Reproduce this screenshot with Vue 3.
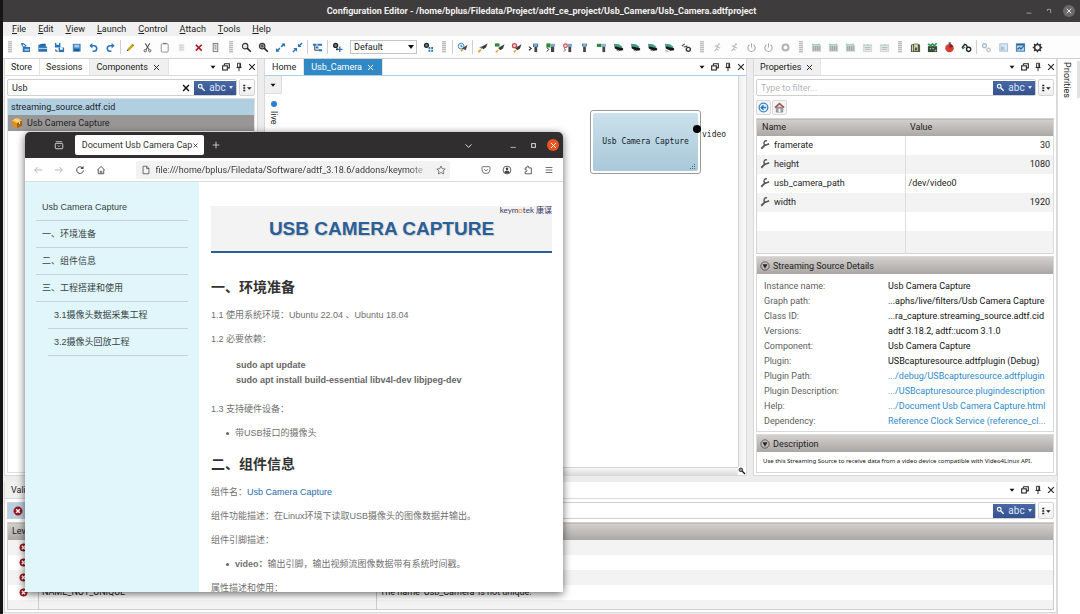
<script setup>
import { ref } from 'vue'

const icons = {
  // dock controls
  down: '<path d="M3 4.500h6L6 8z" fill="#111"/>',
  float: '<path d="M4 2h6v5H8M4 2v2" fill="none" stroke="#222" stroke-width="1.300"/><rect x="2" y="4.600" width="5.600" height="5" fill="#fff" stroke="#222" stroke-width="1.300"/>',
  pin: '<path d="M4.300 1.500h3.600v5H4.300zM3 6.700h6M6 7v4" fill="none" stroke="#222" stroke-width="1.100"/><path d="M6.500 2h1.400v4.500H6.500z" fill="#222"/>',
  close: '<path d="M2.600 2.600l6.800 6.800M9.400 2.600L2.600 9.400" stroke="#222" stroke-width="1.300"/>',
  closeW: '<path d="M2.600 2.600l6.800 6.800M9.400 2.600L2.600 9.400" stroke="#fff" stroke-width="1.300"/>',
  clear: '<path d="M2.500 2.500l7 7M9.500 2.500l-7 7" stroke="#111" stroke-width="1.800"/>',
  lens: '<circle cx="4.300" cy="4.300" r="2.500" fill="none" stroke="#fff" stroke-width="1.500"/><path d="M6.200 6.200l4 4" stroke="#fff" stroke-width="1.800"/>',
  opts: '<path d="M1.500 2h2.400v2H1.500zM1.500 5h2.400v2H1.500zM1.500 8h2.400v2H1.500zM6 5h5.600L8.800 8z" fill="#222"/>',
  // toolbar: file
  new: '<path d="M3 4.500h3l1 1h4V11H3z" fill="#2c74b8"/><path d="M5 7.500h5v2H5z" fill="#a9c9e4"/><path d="M1 2h3.500M2.500 1v4M4.500 2.500l2.500 2" stroke="#2c74b8" stroke-width="1.200"/>',
  open: '<path d="M1.500 10.500V3h3l1-1h4v3h1.500v5.500z" fill="#2c74b8"/><path d="M2 7h9" stroke="#cfe0ee"/><path d="M3 3h6" stroke="#154b7c"/>',
  saveas: '<path d="M1 1h6v5H1z" fill="#2c74b8"/><path d="M2.500 1h3v2h-3z" fill="#fff"/><path d="M5 6h6v5H5z" fill="#2c74b8"/><path d="M6.500 6h3v2.400h-3z" fill="#fff"/><path d="M2 8v2h2" stroke="#333" fill="none"/>',
  save: '<path d="M2 2h8.500v8.500H2z" fill="#3a82c2"/><path d="M3.500 3h5.500v3H3.500z" fill="#a9cbe6"/><path d="M3.500 8H9v2H3.500z" fill="#185488"/>',
  undo: '<path d="M3 4h3.500a3 3 0 010 6H5" fill="none" stroke="#2c74b8" stroke-width="1.700"/><path d="M4.800 1v6L1.500 4z" fill="#2c74b8"/>',
  redo: '<path d="M9 4H5.500a3 3 0 000 6H7" fill="none" stroke="#2c74b8" stroke-width="1.700"/><path d="M7.200 1v6l3.300-3z" fill="#2c74b8"/>',
  pencil: '<path d="M3.500 8.500l5-5" stroke="#c9a80c" stroke-width="2.600"/><path d="M8 2.800l1.500 1.400" stroke="#8a7420" stroke-width="1.500"/><path d="M2 10l.6-2 1.500 1.300z" fill="#333"/>',
  cut: '<path d="M3.500 1.500l4.300 7M8.500 1.500l-4.300 7" stroke="#555" stroke-width="1.100"/><circle cx="3.500" cy="9.500" r="1.300" fill="none" stroke="#555"/><circle cx="8.500" cy="9.500" r="1.300" fill="none" stroke="#555"/>',
  copy: '<rect x="2.500" y="2" width="7.500" height="9" rx="1" fill="#fff" stroke="#888"/><path d="M4.500 1.500h3.500" stroke="#666"/>',
  paste: '<rect x="3" y="2" width="6" height="8" fill="#e6e6e6"/><path d="M4 4h4M4 6h4M4 8h4" stroke="#d2d2d2"/>',
  del: '<path d="M3 3l6.500 6.500M9.500 3L3 9.500" stroke="#b51a1a" stroke-width="1.800"/>',
  panel: '<rect x="3.500" y="1.500" width="5" height="9" fill="#eee" stroke="#777"/><path d="M5 3.500h2M5 5.500h2M5 7.500h2" stroke="#777"/>',
  zoomout: '<circle cx="4.500" cy="4.500" r="3" fill="#e4e4e4" stroke="#333" stroke-width="1.200"/><path d="M6.700 6.700l4 4" stroke="#222" stroke-width="1.700"/>',
  zoomin: '<circle cx="4.500" cy="4.500" r="3" fill="#aaa" stroke="#333" stroke-width="1.200"/><path d="M6.700 6.700l4 4" stroke="#222" stroke-width="1.700"/><path d="M3 4.500h3M4.500 3v3" stroke="#333"/>',
  expand: '<path d="M7 1.500h4v4zM5 10.500H1v-4z" fill="#2c74b8"/><path d="M6.700 5.300l3-3M2.300 9.700l3-3" stroke="#2c74b8" stroke-width="1.600"/>',
  shrink: '<path d="M6.500 1.500v4h4zM5.500 10.500v-4h-4z" fill="#2c74b8"/><path d="M8 4l3-3M1 11l3-3" stroke="#2c74b8" stroke-width="1.600"/>',
  tree: '<path d="M1 2h4v2H1zM6 2h5v2H6zM4 5h3v2H4zM7 8h4v2H7z" fill="#2c74b8"/><path d="M3 4v5h4" fill="none" stroke="#333"/>',
  gearplus: '<circle cx="4" cy="3.800" r="2.200" fill="#777" stroke="#222" stroke-width="1.300"/><path d="M8.500 5v6M5.500 8h6" stroke="#2c74b8" stroke-width="1.500"/><circle cx="5.500" cy="8" r="1.200" fill="#333"/>',
  geargrid: '<circle cx="3.800" cy="3.600" r="2.200" fill="#777" stroke="#222" stroke-width="1.300"/><path d="M6 5.500h2v2H6zM9 5.500h2v2H9zM6 8.500h2v2H6zM9 8.500h2v2H9z" fill="#2c74b8"/>',
  clockrocket: '<circle cx="4.500" cy="4.500" r="3.200" fill="#e1edf7" stroke="#4a86bd"/><path d="M4.500 3v2h1.500" stroke="#2c74b8" fill="none"/><path d="M11.500 3L9.500 9 5.500 7z" fill="#4a4a4a"/><path d="M4.500 10l2-2" stroke="#e0861b" stroke-width="1.500"/>',
  rocket: '<path d="M11.500 1.500L9.800 6 7 8 4.200 5.500z" fill="#3d3d3d"/><path d="M5 5L2.500 5.700l2.800 2.300z" fill="#777"/><path d="M1.500 11l2.700-2.500" stroke="#e7a11b" stroke-width="2"/>',
  rocketg: '<path d="M11.500 2.500L9.800 7 7 9 4.500 6.500z" fill="#3d3d3d"/><path d="M2 11l2.500-2" stroke="#e7a11b" stroke-width="1.700"/><path d="M1 1.500h5V5H1z" fill="#2e8b3d"/>',
  rocketr: '<path d="M11.500 2.500L9.800 7 7 9 4.500 6.500z" fill="#3d3d3d"/><path d="M3 11l2.500-2" stroke="#e7a11b" stroke-width="1.700"/><circle cx="3.800" cy="4" r="2.200" fill="#f3d3d6" stroke="#c34a55" stroke-width="1.400"/>',
  term: '<path d="M1 5l2.500 2L1 9" fill="none" stroke="#222" stroke-width="1.100"/><path d="M5.500 1.500H11V5H5.500z" fill="#7aa9cf"/><path d="M7 5h3v6H7z" fill="#444"/><path d="M6 2.500v3M10.500 2.500v3" stroke="#33678f"/>',
  termg: '<path d="M1.500 1.500H6V6H1.500z" fill="#2e8b3d"/><path d="M2 6l2 2-2 2.500" fill="none" stroke="#222"/><path d="M6 2h5v3H6z" fill="#7aa9cf"/><path d="M6.500 5h3.500v6H6.500z" fill="#444"/>',
  termr: '<circle cx="3.800" cy="4" r="2" fill="#f7dddd" stroke="#c34a55" stroke-width="1.300"/><path d="M2 7l2 1.500-2 2" fill="none" stroke="#a33"/><path d="M6 2h5v3H6z" fill="#7aa9cf"/><path d="M7 5h3v6H7z" fill="#444"/>',
  torch: '<path d="M3.500 1.500h5V5h-5z" fill="#8db7d9"/><path d="M4.500 5h3v6h-3z" fill="#444"/><path d="M4 2v2.500M8 2v2.500" stroke="#33678f"/>',
  torchg: '<path d="M1 2h5v3.500H1z" fill="#2e8b3d"/><path d="M6 2h5v3H6z" fill="#8db7d9"/><path d="M7 5h3v6H7z" fill="#444"/>',
  car: '<path d="M1 2l5.500.5 4 3L9 7 1.500 4.500z" fill="#3f9c86"/><path d="M1.500 4.500l2.500.7 7 1.500V9L7 9.500 2 7z" fill="#161616"/><path d="M3.500 8.500l2.500 1.500" stroke="#777"/>',
  carlight: '<path d="M1 2l5.500.5 4 3L9 7 1.500 4.500z" fill="#3f9c86"/><path d="M1.500 4.500l2.500.7 7 1.500V9L7 9.500 2 7z" fill="#161616"/><path d="M1 9h3M2 10.500h3" stroke="#aaa"/>',
  wrenchcog: '<path d="M1 4.500l3-2.500M3 5.500l4-1" fill="none" stroke="#444" stroke-width="1.300"/><circle cx="8" cy="8" r="2.200" fill="#fff" stroke="#333" stroke-width="1.500"/>',
  run: '<circle cx="7.500" cy="2.500" r="1.100" fill="#bbb"/><path d="M3 4.500l3-.5 1 2 2 .5M6 5L5 7.500 7 9M5 7.500L2.500 10" fill="none" stroke="#bbb" stroke-width="1.200"/>',
  power: '<path d="M3.800 3a4 4 0 104.400 0M6 1.300V6" fill="none" stroke="#aaa" stroke-width="1.100"/>',
  stop: '<circle cx="6" cy="6" r="3.300" fill="none" stroke="#b4b4b4" stroke-width="2.200"/>',
  film: '<path d="M1 3.500h10v7H1z" fill="#c6ccc9"/><path d="M1 3.500V1.500l4 1 5-1v2z" fill="#9fd2b9"/><path d="M3 4.500v5M5 4.500v5M7 4.500v5M9 4.500v5" stroke="#98a39e"/>',
  filmlt: '<path d="M1.500 4h9v6.500h-9z" fill="#e4e8e6" stroke="#c3cbc7" stroke-width=".7"/><path d="M1.500 4V2l3 1 2-1 2 1 2-1v2z" fill="#aadcc4"/><path d="M3 6h6M3 8h6" stroke="#b3bbb7"/>',
  book: '<path d="M1 3v8h10V3L8 1.500 4 2z" fill="#5a5a48"/><path d="M4.500 2.500h4v7h-4z" fill="#d8d9a4"/><path d="M2.800 3.500v6.500" stroke="#e8e8e0"/><path d="M5.500 6h2v3h-2z" fill="#49493e"/>',
  clap: '<path d="M1 4.500h10V11H1z" fill="#394a3d"/><path d="M1 2l3 2 2-2 2 2 2.500-2.500" fill="none" stroke="#2b9b50" stroke-width="1.800"/><path d="M3 6.500h1.500v1.500H3zM6 6.500h1.500v1.500H6zM8.500 8.500H10V10H8.500z" fill="#a9c8ad"/>',
  record: '<circle cx="6" cy="6.700" r="4.600" fill="#d83b32"/><path d="M6 6.700V2.100a4.600 4.600 0 014 2.400z" fill="#7a2420"/><path d="M5 1.200h2.500" stroke="#333" stroke-width="1.500"/>',
  tools: '<path d="M1 6.500l3-4 2 1 1 2.500" fill="none" stroke="#222" stroke-width="1.500"/><circle cx="8.300" cy="8" r="2.300" fill="#fff" stroke="#222" stroke-width="1.500"/><path d="M1.500 7.500L4.500 5.500" stroke="#2c74b8" stroke-width="1.500"/>',
  link: '<circle cx="3.800" cy="4" r="2.100" fill="none" stroke="#a9b9c8" stroke-width="1.400"/><circle cx="8.300" cy="8.500" r="1.900" fill="none" stroke="#b7c5d2" stroke-width="1.400"/>',
  box: '<rect x="2" y="2" width="8.500" height="8" fill="#dbe7f1" stroke="#9dbdd8"/><path d="M3 5h4v4H3z" fill="#a9c5dc"/>',
  boxes: '<rect x="1.500" y="2" width="9" height="8" fill="#b4d1e9" stroke="#3077b3"/><path d="M2 3h8" stroke="#245f93" stroke-width="1.500"/><path d="M2.500 8l2.500-2 1.500 1.500L10 4" fill="none" stroke="#245f93" stroke-width="1.200"/>',
  gear: '<circle cx="6" cy="6" r="3.200" fill="none" stroke="#333" stroke-width="1.700"/><path d="M6 .8v2M6 9.200v2M.8 6h2M9.200 6h2M2.300 2.300l1.300 1.300M8.400 8.400l1.300 1.300M9.700 2.300L8.400 3.600M3.600 8.400L2.300 9.700" stroke="#333" stroke-width="1.500"/>',
  // panels
  cube: '<path d="M6 .8l5 2.700v5L6 11.300 1 8.500v-5z" fill="#d9901a"/><path d="M6 .8l5 2.700L6 6.200 1 3.500z" fill="#f6c75a"/><path d="M6 6.200l5-2.700v5L6 11.300z" fill="#a8630f"/><path d="M3.500 2.200l5 2.700v2" fill="none" stroke="#fbe5ae"/>',
  wrench: '<path d="M1.500 10.500L6.500 5.500" stroke="#555" stroke-width="2.200"/><path d="M8.300 1.200A2.600 2.600 0 106.600 6.200L11 4.500" fill="none" stroke="#555" stroke-width="1.700"/>',
  back: '<circle cx="6" cy="6" r="4.700" fill="#eaf3fb" stroke="#3f87c4" stroke-width="1.400"/><path d="M9 6H4M6 3.600L3.500 6 6 8.400" fill="none" stroke="#2c74b8" stroke-width="1.500"/>',
  house: '<path d="M2.500 5.500h7V11h-7z" fill="#a2a2a2" stroke="#777" stroke-width=".7"/><path d="M5 7.500h2V11H5z" fill="#fff"/><path d="M1 6.200l5-4.500 5 4.500" fill="none" stroke="#a4575a" stroke-width="1.800"/>',
  fold: '<circle cx="6" cy="6" r="5" fill="none" stroke="#444" stroke-width=".9"/><path d="M3 3.800h6L6 9z" fill="#222"/>',
  error: '<circle cx="6" cy="6" r="5" fill="#a4151b" stroke="#7b0c10" stroke-width=".6"/><path d="M3.800 3.800l4.400 4.400M8.200 3.800L3.800 8.200" stroke="#fff" stroke-width="1.800"/>',
  magnify: '<circle cx="4.300" cy="4.300" r="2.700" fill="#999" stroke="#222" stroke-width="1.300"/><path d="M6.500 6.500l4 4" stroke="#111" stroke-width="2"/>',
  // window buttons
  min: '<path d="M3 8.500h6" stroke="#aaa"/>',
  restore: '<path d="M4 4h4v4.500M4 4v2" fill="none" stroke="#aaa"/>',
  minW: '<path d="M2 8.500h7" stroke="#ddd"/>',
  max: '<rect x="3.500" y="3.500" width="5" height="5" fill="none" stroke="#ddd" stroke-width="1.300"/>',
  // browser
  archive: '<path d="M2 2h8" stroke="#ccc"/><rect x="1.500" y="4" width="9" height="6.500" rx="1" fill="none" stroke="#ccc" stroke-width="1.200"/><path d="M4.500 6.500L6 8l1.500-1.500" fill="none" stroke="#ccc"/>',
  plus: '<path d="M6 2v8M2 6h8" stroke="#ddd"/>',
  chev: '<path d="M2 4.500L6 8.500l4-4" fill="none" stroke="#ddd" stroke-width="1.300"/>',
  left: '<path d="M11 6H2M5.500 2.500L2 6l3.500 3.500" fill="none" stroke="#aaa"/>',
  right: '<path d="M1 6h9M6.500 2.500L10 6 6.500 9.500" fill="none" stroke="#aaa"/>',
  reload: '<path d="M10 6.500A4 4 0 118.700 3.200" fill="none" stroke="#444" stroke-width="1.200"/><path d="M10.200 1v3.800H6.500z" fill="#444"/>',
  home: '<path d="M1.500 6L6 1.800 10.500 6M2.700 5.200v5.300h6.600V5.200M5 10.300V7.500h2v2.800" fill="none" stroke="#444"/>',
  page: '<path d="M2.500 1.500h4.500l2.500 2.500v6.500h-7zM6.800 1.500v2.700h2.700" fill="none" stroke="#555"/>',
  star: '<path d="M6 1.200l1.500 3.200 3.500.4-2.600 2.400.7 3.500L6 9l-3.100 1.700.7-3.500L1 4.800l3.500-.4z" fill="none" stroke="#555" stroke-width=".9"/>',
  pocket: '<path d="M2 2h8a.8.8 0 01.8.8V5.500a4.800 4.800 0 01-9.600 0V2.800A.8.8 0 012 2zM3.800 5L6 7.200 8.200 5" fill="none" stroke="#444" stroke-width=".9"/>',
  user: '<circle cx="6" cy="6" r="4.700" fill="none" stroke="#444"/><circle cx="6" cy="4.700" r="1.600" fill="#444"/><path d="M2.800 8.600c1-2.200 5.400-2.200 6.400 0A4 4 0 016 10.300a4 4 0 01-3.200-1.700z" fill="#444"/>',
  puzzle: '<path d="M4.500 3.500V2.500a1.200 1.200 0 012.400 0v1H10v7H2.500V8h1a1.200 1.200 0 000-2.400h-1V3.500z" fill="none" stroke="#444"/>',
  menu: '<path d="M2 3h8M2 6h8M2 9h8" stroke="#555"/>'
}

const menus = ['File', 'Edit', 'View', 'Launch', 'Control', 'Attach', 'Tools', 'Help']
const bar1 = ['#', 'new', 'open', 'saveas', 'save', 'undo', 'redo', '|', 'pencil', 'cut', 'copy', 'paste', 'del', 'panel', '#', 'zoomout', 'zoomin', 'expand', 'shrink', '|', 'tree', '|', 'gearplus']
const bar2 = ['geargrid', '#', '|', 'clockrocket', '|', 'rocket', 'rocketg', 'rocketr', 'term', 'termg', 'termr', 'torch', 'torchg', 'car', 'car', 'car', 'carlight', 'wrenchcog', '#', 'run', 'run', 'power', 'power', 'stop', '#', 'film', 'film', 'film', 'filmlt', 'filmlt', '#', 'book', 'clap', 'record', 'tools', '|', 'link', 'box', 'boxes', 'gear']
const controls = ['down', 'float', 'pin', 'close']

const search = ref('Usb')
const propFilter = ref('')
const issueFilter = ref('')
const url = ref('file:///home/bplus/Filedata/Software/adtf_3.18.6/addons/keymote')

const props = [
  ['framerate', '30', true],
  ['height', '1080', true],
  ['usb_camera_path', '/dev/video0', false],
  ['width', '1920', true]
]
const details = [
  ['Instance name:', 'Usb Camera Capture'],
  ['Graph path:', '...aphs/live/filters/Usb Camera Capture'],
  ['Class ID:', '...ra_capture.streaming_source.adtf.cid'],
  ['Versions:', 'adtf 3.18.2, adtf::ucom 3.1.0'],
  ['Component:', 'Usb Camera Capture'],
  ['Plugin:', 'USBcapturesource.adtfplugin (Debug)'],
  ['Plugin Path:', '.../debug/USBcapturesource.adtfplugin', true],
  ['Plugin Description:', '.../USBcapturesource.plugindescription', true],
  ['Help:', '.../Document Usb Camera Capture.html', true],
  ['Dependency:', 'Reference Clock Service (reference_cl...', true]
]
const issues = [['', ''], ['', ''], ['', ''], ['NAME_NOT_UNIQUE', "The name 'Usb_Camera' is not unique."]]
const chapters = ['Usb Camera Capture', '一、环境准备', '二、组件信息', '三、工程搭建和使用']
const subchapters = ['3.1摄像头数据采集工程', '3.2摄像头回放工程']
</script>

<template>
  <div class="desktop">
    <div class="app">
      <header class="titlebar">
        <h1>Configuration Editor - /home/bplus/Filedata/Project/adtf_ce_project/Usb_Camera/Usb_Camera.adtfproject</h1>
        <div class="winbtns">
          <button aria-label="Minimize"><svg viewBox="0 0 12 12" v-html="icons.min" /></button>
          <button aria-label="Restore"><svg viewBox="0 0 12 12" v-html="icons.restore" /></button>
          <button class="round" aria-label="Close"><svg viewBox="0 0 12 12" v-html="icons.closeW" /></button>
        </div>
      </header>

      <nav class="menubar">
        <button v-for="m in menus" :key="m"><u>{{ m[0] }}</u>{{ m.slice(1) }}</button>
      </nav>

      <div class="toolbar">
        <template v-for="(t, i) in bar1" :key="'a' + i">
          <span v-if="t === '#'" class="grip" />
          <span v-else-if="t === '|'" class="sep" />
          <button v-else :aria-label="t"><svg viewBox="0 0 12 12" v-html="icons[t]" /></button>
        </template>
        <span class="select"><select aria-label="Layout"><option>Default</option></select></span>
        <template v-for="(t, i) in bar2" :key="'b' + i">
          <span v-if="t === '#'" class="grip" />
          <span v-else-if="t === '|'" class="sep" />
          <button v-else :aria-label="t"><svg viewBox="0 0 12 12" v-html="icons[t]" /></button>
        </template>
      </div>

      <div class="work">
        <div class="docks">
          <div class="upper">
            <section class="dock left">
              <div class="tabs">
                <button class="tab">Store</button>
                <button class="tab">Sessions</button>
                <button class="tab on">Components <svg viewBox="0 0 12 12" v-html="icons.close" /></button>
                <div class="ctl"><button v-for="c in controls" :key="c" :aria-label="c"><svg viewBox="0 0 12 12" v-html="icons[c]" /></button></div>
              </div>
              <div class="body">
                <div class="filter">
                  <div class="field">
                    <input v-model="search" aria-label="Search components">
                    <button class="wipe" aria-label="Clear"><svg viewBox="0 0 12 12" v-html="icons.clear" /></button>
                    <button class="abc"><svg viewBox="0 0 12 12" v-html="icons.lens" />abc<i /></button>
                  </div>
                  <button class="opts" aria-label="Options"><svg viewBox="0 0 12 12" v-html="icons.opts" /></button>
                </div>
                <ul class="list">
                  <li class="group">streaming_source.adtf.cid</li>
                  <li class="item"><svg viewBox="0 0 12 12" v-html="icons.cube" />Usb Camera Capture</li>
                </ul>
              </div>
            </section>

            <section class="dock centre">
              <div class="tabs blue">
                <button class="tab">Home</button>
                <button class="tab active">Usb_Camera <svg viewBox="0 0 12 12" v-html="icons.closeW" /></button>
                <div class="ctl"><button v-for="c in controls" :key="c" :aria-label="c"><svg viewBox="0 0 12 12" v-html="icons[c]" /></button></div>
              </div>
              <div class="graph">
                <aside class="rail">
                  <button aria-label="Graphs"><svg viewBox="0 0 12 12" v-html="icons.down" /></button>
                  <i class="dot" /><span>live</span>
                </aside>
                <div class="canvas">
                  <div class="node"><div>Usb Camera Capture</div><i class="port" /><span class="portname">video</span>
                    <svg class="resize" viewBox="0 0 6 6"><path d="M4 0h1v1H4zM2 2h1v1H2zM4 2h1v1H4zM0 4h1v1H0zM2 4h1v1H2zM4 4h1v1H4z" fill="#567" /></svg>
                  </div>
                </div>
                <div class="vscroll" />
              </div>
              <div class="hscroll"><span /><svg viewBox="0 0 12 12" v-html="icons.magnify" /></div>
            </section>

            <section class="dock right">
              <div class="tabs">
                <button class="tab on">Properties <svg viewBox="0 0 12 12" v-html="icons.close" /></button>
                <div class="ctl"><button v-for="c in controls" :key="c" :aria-label="c"><svg viewBox="0 0 12 12" v-html="icons[c]" /></button></div>
              </div>
              <div class="body">
                <div class="filter">
                  <div class="field">
                    <input v-model="propFilter" placeholder="Type to filter..." aria-label="Filter properties">
                    <button class="abc"><svg viewBox="0 0 12 12" v-html="icons.lens" />abc<i /></button>
                  </div>
                  <button class="opts" aria-label="Options"><svg viewBox="0 0 12 12" v-html="icons.opts" /></button>
                </div>
                <div class="crumbs">
                  <button aria-label="Back"><svg viewBox="0 0 12 12" v-html="icons.back" /></button>
                  <button aria-label="Home"><svg viewBox="0 0 12 12" v-html="icons.house" /></button>
                </div>
                <table class="props">
                  <thead><tr><th>Name</th><th>Value</th></tr></thead>
                  <tbody>
                    <tr v-for="p in props" :key="p[0]">
                      <td><svg viewBox="0 0 12 12" v-html="icons.wrench" />{{ p[0] }}</td>
                      <td :class="{ num: p[2] }">{{ p[1] }}</td>
                    </tr>
                    <tr><td /><td /></tr>
                    <tr class="last"><td /><td /></tr>
                  </tbody>
                </table>
                <section class="card grow">
                  <h2><svg viewBox="0 0 12 12" v-html="icons.fold" />Streaming Source Details</h2>
                  <dl>
                    <div v-for="d in details" :key="d[0]">
                      <dt>{{ d[0] }}</dt>
                      <dd><a v-if="d[2]" href="#">{{ d[1] }}</a><template v-else>{{ d[1] }}</template></dd>
                    </div>
                  </dl>
                </section>
                <section class="card">
                  <h2><svg viewBox="0 0 12 12" v-html="icons.fold" />Description</h2>
                  <p>Use this Streaming Source to receive data from a video device compatible with Video4Linux API.</p>
                </section>
              </div>
            </section>
          </div>

          <section class="dock bottom">
            <div class="tabs">
              <button class="tab on">Validation</button>
              <div class="ctl"><button v-for="c in controls" :key="c" :aria-label="c"><svg viewBox="0 0 12 12" v-html="icons[c]" /></button></div>
            </div>
            <div class="body">
              <div class="filter">
                <button class="errs" aria-label="Errors"><svg viewBox="0 0 12 12" v-html="icons.error" /></button>
                <div class="field">
                  <input v-model="issueFilter" aria-label="Filter issues">
                  <button class="abc"><svg viewBox="0 0 12 12" v-html="icons.lens" />abc<i /></button>
                </div>
                <button class="opts" aria-label="Options"><svg viewBox="0 0 12 12" v-html="icons.opts" /></button>
              </div>
              <table class="issues">
                <thead><tr><th class="lv">Level</th><th class="id" /><th /></tr></thead>
                <tbody>
                  <tr v-for="(r, i) in issues" :key="i">
                    <td class="lv"><svg viewBox="0 0 12 12" v-html="icons.error" /></td><td>{{ r[0] }}</td><td>{{ r[1] }}</td>
                  </tr>
                  <tr class="rest"><td /><td /><td /></tr>
                </tbody>
              </table>
            </div>
          </section>
        </div>
        <aside class="strip"><button>Priorities</button></aside>
      </div>
    </div>

    <div class="browser">
      <div class="bbar">
        <svg class="arch" viewBox="0 0 12 12" v-html="icons.archive" />
        <button class="btab"><span>Document Usb Camera Cap</span><svg viewBox="0 0 12 12" v-html="icons.close" /></button>
        <button class="add" aria-label="New tab"><svg viewBox="0 0 12 12" v-html="icons.plus" /></button>
        <div class="bwin">
          <button class="tablist" aria-label="List tabs"><svg viewBox="0 0 12 12" v-html="icons.chev" /></button>
          <button aria-label="Minimize"><svg viewBox="0 0 12 12" v-html="icons.minW" /></button>
          <button aria-label="Maximize"><svg viewBox="0 0 12 12" v-html="icons.max" /></button>
          <button class="orange" aria-label="Close"><svg viewBox="0 0 12 12" v-html="icons.closeW" /></button>
        </div>
      </div>
      <div class="bnav">
        <div class="grp"><button v-for="n in ['left', 'right', 'reload', 'home']" :key="n" :aria-label="n"><svg viewBox="0 0 12 12" v-html="icons[n]" /></button></div>
        <div class="addr">
          <svg viewBox="0 0 12 12" v-html="icons.page" />
          <input v-model="url" aria-label="Address">
          <button aria-label="Bookmark"><svg viewBox="0 0 12 12" v-html="icons.star" /></button>
        </div>
        <div class="grp"><button v-for="n in ['pocket', 'user', 'puzzle', 'menu']" :key="n" :aria-label="n"><svg viewBox="0 0 12 12" v-html="icons[n]" /></button></div>
      </div>
      <div class="page">
        <nav class="toc">
          <a v-for="c in chapters" :key="c" href="#">{{ c }}</a>
          <a v-for="c in subchapters" :key="c" class="sub" href="#">{{ c }}</a>
        </nav>
        <article class="doc">
          <div class="hero">
            <span class="brand">keym<b>o</b>tek 康谋</span>
            <h1>USB CAMERA CAPTURE</h1>
          </div>
          <h2 class="first">一、环境准备</h2>
          <p>1.1 使用系统环境：Ubuntu 22.04 、Ubuntu 18.04</p>
          <p>1.2 必要依赖：</p>
          <pre>sudo apt update
sudo apt install build-essential libv4l-dev libjpeg-dev</pre>
          <p>1.3 支持硬件设备：</p>
          <ul><li>带USB接口的摄像头</li></ul>
          <h2>二、组件信息</h2>
          <p>组件名：<a href="#">Usb Camera Capture</a></p>
          <p>组件功能描述：在Linux环境下读取USB摄像头的图像数据并输出。</p>
          <p>组件引脚描述：</p>
          <ul><li><b>video：</b>输出引脚，输出视频流图像数据带有系统时间戳。</li></ul>
          <p>属性描述和使用：</p>
        </article>
      </div>
    </div>
  </div>
</template>

<style>
html, body { margin: 0; background: #161616; overflow: hidden; }
</style>

<style scoped>
.desktop, .desktop * { box-sizing: border-box; }
.desktop { position: relative; height: 100vh; padding-left: 3px; overflow: hidden; background: #161616; font: 9px/12px "Noto Sans", "Noto Sans CJK SC", sans-serif; color: #222; }
button { margin: 0; padding: 0; border: 0; background: none; font: inherit; color: inherit; display: flex; align-items: center; justify-content: center; white-space: nowrap; }
input, select { font: inherit; color: inherit; border: 0; padding: 0; margin: 0; background: none; outline: 0; min-width: 0; }
svg { display: block; flex: none; width: 10px; height: 10px; }
h1, h2, p, ul, dl, dd, pre { margin: 0; padding: 0; }
a { text-decoration: none; color: #2f8ac8; }
.app { height: 100%; display: flex; flex-direction: column; background: #f0f0f0; font-family: Roboto, "Noto Sans", sans-serif; }

.titlebar { height: 22px; flex: none; display: grid; grid-template-columns: 66px 1fr 66px; align-items: center; background: #3e3c3c; color: #f0efee; }
.titlebar h1 { grid-column: 2; text-align: center; font-size: 9px; line-height: 12px; font-weight: 700; white-space: nowrap; }
.winbtns { display: flex; justify-content: flex-end; gap: 8px; padding-right: 5px; }
.winbtns button { width: 12px; height: 12px; }
.round { border-radius: 50%; background: #6b6969; }
.round svg { width: 8px; height: 8px; }

.menubar { height: 14px; flex: none; display: flex; gap: 12px; padding-left: 9px; }
.toolbar { height: 23px; flex: none; display: flex; align-items: center; background: #fdfdfd; border-bottom: 1px solid #cfcfcf; }
.toolbar button { width: 17px; height: 17px; flex: none; }
.toolbar button svg { width: 11px; height: 11px; }
.grip { width: 4px; height: 12px; flex: none; margin: 0 5px; background: repeating-linear-gradient(#bcbcbc 0 1px, #e4e4e4 1px 2px); }
.sep { width: 1px; height: 14px; flex: none; margin: 0 1px; background: #d0d0d0; }
.select { position: relative; width: 67px; height: 14px; margin: 0 3px 0 4px; border: 1px solid #c4c4c4; background: #fff; display: flex; align-items: center; }
.select select { width: 100%; appearance: none; padding-left: 3px; }
.select::after { content: ""; position: absolute; right: 2px; top: 4px; border: 3px solid transparent; border-top: 4px solid #111; border-bottom: 0; }

.work { flex: 1; min-height: 0; display: flex; }
.docks { flex: 1; min-width: 0; display: flex; flex-direction: column; gap: 6px; padding: 0 0 1px 1px; background: #ededed; }
.upper { flex: 1; min-height: 0; display: grid; grid-template-columns: 254px minmax(0, 1fr) 304px; gap: 6px; }
.strip { width: 23px; flex: none; display: flex; justify-content: space-between; align-items: flex-start; background: #fff; border-left: 1px solid #ddd; }
.strip::after { content: ""; width: 3px; height: 37px; margin-top: 2px; background: #e2e2e2; }
.strip button { writing-mode: vertical-rl; padding: 3px 0 0 3px; line-height: 12px; }

.dock { display: flex; flex-direction: column; min-width: 0; background: #fff; border: 1px solid #d9d9d9; border-top: 0; }
.tabs { height: 17px; flex: none; display: flex; border-bottom: 1px solid #dadada; }
.tab { padding: 0 6px; gap: 4px; border-right: 1px solid #e4e4e4; }
.left .tab { padding-right: 7px; }
.tab svg { width: 9px; height: 9px; }
.tab.on { background: #f0f0f0; }
.tab.active { background: #3089c5; color: #fff; }
.tabs.blue { border-bottom-color: #a9cfe6; }
.ctl { margin-left: auto; display: flex; gap: 3px; }
.ctl button { width: 10px; }
.ctl svg { width: 10px; height: 10px; }
.body { flex: 1; min-height: 0; display: flex; flex-direction: column; padding: 3px 2px 2px; }
.filter { display: flex; gap: 2px; height: 17px; flex: none; }
.field { flex: 1; min-width: 0; display: flex; align-items: center; border: 1px solid #cfcfcf; border-radius: 2px; background: #fff; }
.field input { flex: 1; padding-left: 4px; }
.field input::placeholder { color: #b5b5b5; opacity: 1; }
.wipe { width: 17px; }
.abc { width: 42px; height: 14px; gap: 3px; background: linear-gradient(#4a68a6, #35528e); color: #dbe6fa; font-size: 10px; }
.abc svg { width: 9px; height: 9px; }
.abc i { border: 2px solid transparent; border-top: 3px solid #dbe6fa; border-bottom: 0; }
.opts { width: 16px; border: 1px solid #d4d4d4; border-radius: 2px; background: linear-gradient(#fff, #eee); }

.list { flex: 1; margin-top: 2px; list-style: none; border: 1px solid #e0e0e0; }
.list li { height: 16px; display: flex; align-items: center; gap: 4px; padding-left: 3px; }
.list .group { background: #b0d0e2; }
.list .item { background: #999796; }
.list svg { width: 12px; height: 12px; }

.centre .tab { padding: 0 7px; }
.graph { flex: 1; display: flex; min-height: 0; }
.rail { width: 17px; display: flex; flex-direction: column; align-items: center; }
.rail button { width: 100%; height: 18px; background: #f0f0f0; border-bottom: 1px solid #ddd; border-right: 1px solid #ddd; }
.dot { width: 6px; height: 6px; margin: 7px 0 4px; border-radius: 50%; background: #2b7fd0; }
.rail span { writing-mode: vertical-rl; }
.canvas { flex: 1; position: relative; font: 8px/12px "DejaVu Sans Mono", monospace; }
.node { position: absolute; left: 308px; top: 34px; width: 111px; height: 64px; padding: 2px; border: 1px solid #999; border-radius: 3px; background: #fff; }
.node div { height: 100%; display: flex; align-items: center; justify-content: center; border-radius: 2px; background: linear-gradient(#cbe1ec, #a9c8d9); white-space: nowrap; color: #15222b; }
.port { position: absolute; right: -1px; top: 14px; width: 8px; height: 8px; border-radius: 50%; background: #000; }
.portname { position: absolute; left: 111px; top: 18px; }
.resize { position: absolute; right: 4px; bottom: 3px; width: 6px; height: 6px; }
.vscroll { width: 8px; border-left: 1px solid #d5d5d5; background: linear-gradient(90deg, #eee, #fafafa); }
.hscroll { height: 8px; flex: none; display: flex; }
.hscroll span { flex: 1; background: linear-gradient(#f7f7f7, #dcdcdc); border-top: 1px solid #d5d5d5; }
.hscroll svg { width: 8px; height: 8px; }

.crumbs { display: flex; gap: 1px; margin: 4px 0 3px; }
.crumbs button { width: 15px; height: 15px; border: 1px solid #d9d9d9; border-radius: 2px; background: #f5f5f5; }
.crumbs svg { width: 11px; height: 11px; }
table { width: 100%; border-collapse: collapse; table-layout: fixed; flex: none; }
th { height: 17px; padding: 0 5px; text-align: left; font-weight: 400; background: linear-gradient(#d3d0ce, #a9a6a4); }
td { padding: 0 3px; white-space: nowrap; }
.props { border: 1px solid #d5d5d5; }
.props td { height: 19px; border-right: 1px solid #ddd; }
.props td:first-child svg { display: inline-block; vertical-align: -2px; margin-right: 4px; }
.props tr:nth-child(even) td { background: #f3f3f3; }
.props .num { text-align: right; }
.props .last td { height: 23px; }
.card { margin-top: 2px; border: 1px solid #d9d9d9; }
.card.grow { flex: 1; }
.card h2 { height: 17px; display: flex; align-items: center; gap: 3px; padding-left: 3px; font-size: 9px; line-height: 12px; font-weight: 400; background: linear-gradient(#d3d0ce, #a9a6a4); }
.card dl { padding: 5px 3px 0 7px; }
.card dl div { display: grid; grid-template-columns: 124px minmax(0, 1fr); line-height: 15px; white-space: nowrap; }
.card dt { color: #5d5d5d; }
.card dd { overflow: hidden; color: #111; }
.card p { padding: 4px 6px 5px; font-family: "Noto Sans", sans-serif; font-size: 6px; line-height: 11px; white-space: nowrap; color: #111; }

.bottom { height: 131px; flex: none; }
.errs { width: 22px; background: #b9cfe3; border: 1px solid #cfcfcf; }
.issues { margin-top: 3px; border: 1px solid #d0d0d0; }
.issues th { padding: 0 4px; }
.issues td { height: 15px; line-height: 13px; border-right: 1px solid #ccc; }
.issues .lv { width: 31px; }
.issues .id { width: 338px; }
.issues td.lv svg { margin-left: 8px; width: 9px; height: 9px; }
.issues tbody tr:nth-child(odd) { background: #f3f3f3; }
.issues .rest td { height: 10px; }

.browser { position: absolute; left: 25px; top: 132px; width: 538px; height: 460px; display: flex; flex-direction: column; overflow: hidden; border-radius: 5px 5px 0 0; background: #fff; box-shadow: 0 2px 9px rgba(0, 0, 0, .6); }
.bbar { height: 26px; flex: none; display: flex; align-items: center; background: #312e2f; }
.arch { margin: 0 10px 0 29px; }
.btab { width: 129px; height: 20px; margin-left: 1px; padding: 0 5px 0 7px; background: #fff; border-radius: 2px; font-family: Roboto, sans-serif; color: #333; }
.btab span { flex: 1; text-align: left; }
.btab svg { width: 7px; height: 7px; }
.add { margin-left: 7px; }
.bwin { margin-left: auto; display: flex; align-items: center; gap: 8px; padding-right: 4px; }
.bwin button { width: 12px; height: 12px; }
.bwin .tablist { margin-right: 25px; }
.bwin svg { width: 9px; height: 9px; }
.orange { border-radius: 50%; background: #e95420; }
.bnav { height: 24px; flex: none; display: flex; align-items: center; justify-content: space-between; padding: 0 9px 0 8px; border-bottom: 1px solid #ddd; }
.grp { display: flex; gap: 11px; }
.addr { width: 314px; height: 18px; display: flex; align-items: center; gap: 5px; padding: 0 4px 0 5px; margin: 0 22px 0 20px; border-radius: 2px; background: #f2f2f2; }
.addr input { flex: 1; font-family: Roboto, sans-serif; color: #3c3c3c; mask-image: linear-gradient(90deg, #000 92%, transparent); }
.page { flex: 1; min-height: 0; display: flex; font-family: "Liberation Sans", "Noto Sans CJK SC", sans-serif; }
.toc { width: 174px; flex: none; padding: 12px 11px; background: #e0f6fa; }
.toc a { display: block; height: 27px; padding-left: 6px; line-height: 26px; border-bottom: 1px solid #c3d3d6; color: #3a4446; }
.toc .sub { margin-left: 12px; }
.doc { flex: 1; min-width: 0; padding: 24px 11px 0 12px; color: #707070; }
.hero { position: relative; height: 47px; padding-top: 10px; background: #f3f3f3; border-bottom: 2px solid #2b6199; text-align: center; }
.hero h1 { font-size: 19px; line-height: 25px; color: #2a6099; text-shadow: 1px 1px 1px #ccc; }
.brand { position: absolute; right: 0; top: 0; font: 8px/9px Lato, "Noto Sans CJK SC", sans-serif; color: #3a3a66; }
.brand b { color: #f08030; font-weight: 400; }
.doc h2 { margin: 13px 0 10px; font-size: 14px; line-height: 22px; color: #333; }
.doc h2.first { margin-top: 23px; }
.doc p { line-height: 14px; margin-bottom: 10px; white-space: nowrap; }
.doc p a { color: #2c6ba6; }
.doc pre { margin: 12px 0 14px 25px; font: 700 9px/15px "Liberation Sans", sans-serif; color: #666; }
.doc ul { margin: 0 0 10px 15px; list-style: none; line-height: 14px; white-space: nowrap; }
.doc li { display: flex; align-items: center; }
.doc li::before { content: ""; width: 3px; height: 3px; margin-right: 6px; border-radius: 50%; background: #666; }
</style>
